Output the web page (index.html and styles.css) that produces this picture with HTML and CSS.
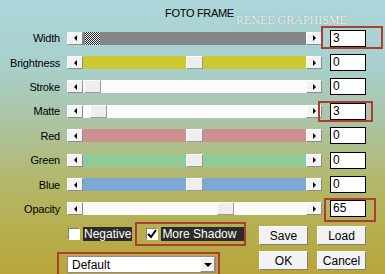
FILE: index.html
```html
<!DOCTYPE html>
<html lang="en">
<head>
<meta charset="UTF-8">
<title>Foto Frame</title>
<link rel="stylesheet" href="styles.css">
</head>
<body>
<div class="dialog">
    <div class="title">
        <span class="name">FOTO FRAME</span>
        <span class="mark">RENEE GRAPHISME</span>
    </div>

    <div class="rows">
        <div class="row">
            <span class="label">Width</span>
            <div class="slider">
                <span class="arrow left"></span>
                <div class="track grey"><span class="thumb checker" style="left:2px"></span></div>
                <span class="arrow right"></span>
            </div>
            <div class="field hl hl-width">3</div>
        </div>
        <div class="row">
            <span class="label">Brightness</span>
            <div class="slider">
                <span class="arrow left"></span>
                <div class="track yellow"><span class="thumb" style="left:103px"></span></div>
                <span class="arrow right"></span>
            </div>
            <div class="field">0</div>
        </div>
        <div class="row">
            <span class="label">Stroke</span>
            <div class="slider">
                <span class="arrow left"></span>
                <div class="track white"><span class="thumb" style="left:1px"></span></div>
                <span class="arrow right"></span>
            </div>
            <div class="field">0</div>
        </div>
        <div class="row">
            <span class="label">Matte</span>
            <div class="slider">
                <span class="arrow left"></span>
                <div class="track white"><span class="thumb" style="left:7px"></span></div>
                <span class="arrow right"></span>
            </div>
            <div class="field hl hl-matte">3</div>
        </div>
        <div class="row">
            <span class="label">Red</span>
            <div class="slider">
                <span class="arrow left"></span>
                <div class="track red"><span class="thumb" style="left:103px"></span></div>
                <span class="arrow right"></span>
            </div>
            <div class="field">0</div>
        </div>
        <div class="row">
            <span class="label">Green</span>
            <div class="slider">
                <span class="arrow left"></span>
                <div class="track green"><span class="thumb" style="left:103px"></span></div>
                <span class="arrow right"></span>
            </div>
            <div class="field">0</div>
        </div>
        <div class="row">
            <span class="label">Blue</span>
            <div class="slider">
                <span class="arrow left"></span>
                <div class="track blue"><span class="thumb" style="left:103px"></span></div>
                <span class="arrow right"></span>
            </div>
            <div class="field">0</div>
        </div>
        <div class="row">
            <span class="label">Opacity</span>
            <div class="slider">
                <span class="arrow left"></span>
                <div class="track white"><span class="thumb" style="left:134px"></span></div>
                <span class="arrow right"></span>
            </div>
            <div class="field hl hl-opacity">65</div>
        </div>
    </div>

    <div class="bottom">
        <div class="left-col">
            <div class="checks">
                <label class="check">
                    <span class="box"></span>
                    <span class="text">Negative</span>
                </label>
                <label class="check boxed">
                    <span class="box">
                        <svg width="10" height="10" viewBox="0 0 10 10"><path d="M1 5 L4 8 L9 1" fill="none" stroke="#000" stroke-width="2"/></svg>
                    </span>
                    <span class="text">More Shadow</span>
                </label>
            </div>
            <div class="select-wrap">
                <div class="select">
                    <span>Default</span>
                    <span class="drop"></span>
                </div>
            </div>
        </div>
        <div class="buttons">
            <button>Save</button>
            <button>Load</button>
            <button>OK</button>
            <button>Cancel</button>
        </div>
    </div>
</div>
</body>
</html>
```

FILE: styles.css
```css
body {
    margin: 0;
    font-family: "Liberation Sans", Arial, sans-serif;
    font-size: 11px;
    color: #000;
}
.dialog {
    width: 385px;
    height: 274px;
    overflow: hidden;
    background: linear-gradient(#acd6da 0%, #a8cfcb 25%, #abc4a2 45%, #b3b86e 65%, #b6ae4c 85%, #b9a53a 100%);
}
.title {
    display: flex;
    align-items: flex-start;
    height: 26px;
    padding-left: 165px;
    box-sizing: border-box;
}
.name {
    margin-top: 7px;
    letter-spacing: -0.3px;
}
.mark {
    margin-top: 13px;
    margin-left: 2px;
    font-family: "Liberation Serif", "Times New Roman", serif;
    font-size: 12px;
    color: #eef2ef;
    text-shadow: 0 0 1px #7f9290;
}
.row {
    display: flex;
    align-items: center;
    height: 24.4px;
}
.label {
    width: 60px;
    text-align: right;
    letter-spacing: -0.2px;
    margin-right: 7px;
}
.slider {
    display: flex;
    width: 255px;
    height: 13px;
}
.arrow {
    width: 16px;
    height: 13px;
    box-sizing: border-box;
    background: #f3f3f3;
    border: 1px solid;
    border-color: #fff #8c8c8c #8c8c8c #fff;
    display: flex;
    align-items: center;
    justify-content: center;
}
.arrow::before {
    content: "";
    border-top: 3px solid transparent;
    border-bottom: 3px solid transparent;
}
.arrow.left::before {
    border-right: 3px solid #000;
}
.arrow.right::before {
    border-left: 3px solid #000;
}
.track {
    position: relative;
    flex: 1;
}
.track.grey { background: #858585; }
.track.yellow { background: #cdc930; }
.track.white { background: #fbfbfb; }
.track.red { background: #cd8f90; }
.track.green { background: #8fca98; }
.track.blue { background: #7ca9d4; }
.thumb {
    position: absolute;
    top: 0;
    width: 17px;
    height: 13px;
    box-sizing: border-box;
    background: #eeeeee;
    border: 1px solid;
    border-color: #fff #999 #999 #fff;
}
.thumb.checker {
    width: 15px;
    border: none;
    background: repeating-conic-gradient(#222 0 25%, #f4f4f4 0 50%) 0 0 / 2px 2px;
}
.field {
    position: relative;
    margin-left: 8px;
    width: 36px;
    height: 17px;
    box-sizing: border-box;
    background: #fff;
    border: 1px solid #000;
    font-size: 12px;
    line-height: 15px;
    padding-left: 2px;
}
.hl::after {
    content: "";
    position: absolute;
    border: 2px solid #ac3d33;
}
.hl-width::after { top: -5px; left: -10px; right: -18px; bottom: -3px; }
.hl-matte::after { top: -3px; left: -13px; right: -8px; bottom: -3px; }
.hl-opacity::after { top: -3px; left: -7px; right: -11px; bottom: -6px; }
.bottom {
    display: flex;
    margin-top: 1px;
}
.left-col {
    margin-left: 57px;
    width: 189px;
}
.checks {
    display: flex;
    align-items: center;
    padding-left: 11px;
}
.check {
    display: flex;
    align-items: center;
}
.box {
    width: 12px;
    height: 12px;
    box-sizing: border-box;
    background: #fff;
    border: 1px solid;
    border-color: #808080 #fff #fff #808080;
    display: flex;
    align-items: center;
    justify-content: center;
}
.text {
    margin-left: 3px;
    background: #2b2b2b;
    color: #fff;
    font-size: 12px;
    line-height: 14px;
    padding: 0 1px;
}
.boxed {
    margin-left: 3px;
    border: 2px solid #ac3d33;
    padding: 3px 0 3px 9px;
    width: 114px;
    box-sizing: border-box;
}
.boxed .text {
    flex: 1;
}
.select-wrap {
    margin-top: 6px;
    width: 163px;
    height: 30px;
    box-sizing: border-box;
    border: 2px solid #ac3d33;
    padding: 2px 2px 0 8px;
}
.select {
    display: flex;
    align-items: center;
    justify-content: space-between;
    height: 17px;
    box-sizing: border-box;
    background: #fff;
    border: 1px solid #8c8c8c;
    font-size: 12px;
    line-height: 14px;
    padding-left: 4px;
}
.drop {
    width: 15px;
    height: 15px;
    box-sizing: border-box;
    background: #f0f0f0;
    border: 1px solid;
    border-color: #fff #8c8c8c #8c8c8c #fff;
    display: flex;
    align-items: center;
    justify-content: center;
}
.drop::before {
    content: "";
    border-left: 4px solid transparent;
    border-right: 4px solid transparent;
    border-top: 4px solid #000;
}
.buttons {
    display: grid;
    grid-template-columns: 49px 49px;
    grid-auto-rows: 19px;
    column-gap: 9px;
    row-gap: 6px;
    margin-left: 13px;
    margin-top: 4px;
}
button {
    font-family: "Liberation Sans", Arial, sans-serif;
    font-size: 12px;
    padding: 0;
    background: #f2f2f2;
    border: 1px solid;
    border-color: #fff #7f7f7f #7f7f7f #fff;
    color: #000;
}
```
